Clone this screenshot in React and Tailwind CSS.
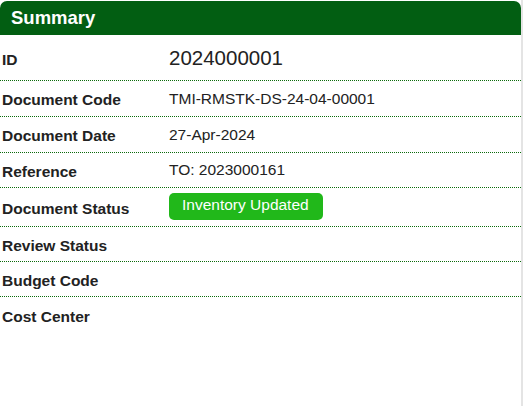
import React from 'react'

const rows = [
  { label: 'Document Code', value: 'TMI-RMSTK-DS-24-04-00001', h: 'h-[36px]' },
  { label: 'Document Date', value: '27-Apr-2024', h: 'h-[36px]' },
  { label: 'Reference', value: 'TO: 2023000161', h: 'h-[35px]' },
  { label: 'Document Status', badge: 'Inventory Updated', h: 'h-[39px]' },
  { label: 'Review Status', h: 'h-[35px]' },
  { label: 'Budget Code', h: 'h-[35px]' },
  { label: 'Cost Center', h: 'h-[36px]', last: true },
]

export default function App() {
  return (
    <div className="w-[524px] h-[406px] bg-white overflow-hidden" style={{ fontFamily: '"Liberation Sans", Arial, sans-serif' }}>
      <div className="w-[523px] h-full border-r-2 border-[#e4e4e4] pt-px">
        <div className="h-[34px] bg-[#025e12] rounded-t-[7px] flex items-center pl-[11px]">
          <span className="text-white font-bold text-[18.5px] leading-none">Summary</span>
        </div>

        <div className="flex items-center h-[46px] border-b border-dotted border-[#0b6b0b] pt-[1px]">
          <div className="w-[169px] pl-[2px] font-bold text-[15.5px] text-[#222] pt-[4px]">ID</div>
          <div className="text-[20.5px] text-[#222]">2024000001</div>
        </div>

        {rows.map((r) => (
          <div
            key={r.label}
            className={`flex items-center ${r.h} ${r.last ? '' : 'border-b border-dotted border-[#0b6b0b]'}`}
          >
            <div className="w-[169px] pl-[2px] font-bold text-[15.5px] text-[#222] pt-[3px] shrink-0">{r.label}</div>
            {r.value && <div className="text-[15.5px] text-[#222]">{r.value}</div>}
            {r.badge && (
              <div className="h-[27px] w-[154px] rounded-[5px] bg-[#21b81a] text-white text-[15.5px] leading-none pl-[13px] pt-[4px] -mt-[2px]">
                {r.badge}
              </div>
            )}
          </div>
        ))}
      </div>
    </div>
  )
}
